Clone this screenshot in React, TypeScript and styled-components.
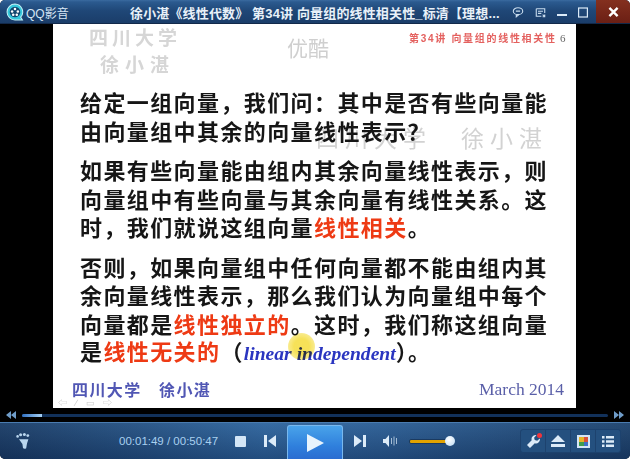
import React from 'react';
import styled, { createGlobalStyle } from 'styled-components';

const GlobalStyle = createGlobalStyle`
  html, body {
    margin: 0;
    padding: 0;
    background: #fff;
    overflow: hidden;
  }
`;

const Player = styled.div`
  width: 630px;
  height: 459px;
  display: flex;
  flex-direction: column;
  background: #000;
  border-radius: 5px 5px 5px 5px;
  overflow: hidden;
  font-family: 'Liberation Sans', 'Noto Sans CJK SC', sans-serif;
`;

const TitleBar = styled.div`
  height: 24px;
  flex: none;
  display: flex;
  align-items: center;
  background: linear-gradient(#3a6ba0 0, #2b5a8f 2px, #1f4777 45%, #1a3c68 100%);
  box-shadow: inset 0 -1px 0 #12294a;
`;

const Logo = styled.svg`
  width: 18px;
  height: 18px;
  margin-left: 6px;
  flex: none;
`;

const AppName = styled.span`
  margin-left: 2px;
  width: 104px;
  flex: none;
  font-size: 12px;
  color: #d5e6f5;
`;

const WindowTitle = styled.span`
  width: 370px;
  flex: none;
  font-size: 13px;
  font-weight: 700;
  letter-spacing: 0.15px;
  color: #e8f1f9;
  white-space: nowrap;
`;

const TitleIcons = styled.div`
  display: flex;
  align-items: center;
  gap: 11px;
  margin-left: 12px;
  width: 84px;
  flex: none;
`;

const CloseButton = styled.div`
  width: 34px;
  height: 23px;
  margin-bottom: 1px;
  flex: none;
  display: flex;
  align-items: center;
  justify-content: center;
  background: linear-gradient(#84301f, #6b1f14);
`;

const VideoArea = styled.div`
  height: 384px;
  flex: none;
  display: flex;
  justify-content: flex-start;
  padding-left: 53px;
  background: #000;
`;

const Slide = styled.div`
  position: relative;
  width: 523px;
  height: 384px;
  box-sizing: border-box;
  padding: 66px 27px 0;
  background: #fff;
  overflow: hidden;
  filter: blur(0.35px);
`;

const Paragraph = styled.p`
  position: relative;
  z-index: 1;
  margin: 0 0 10.5px;
  font-size: 22px;
  letter-spacing: 1.4px;
  line-height: 28.7px;
  font-weight: 700;
  color: #161616;
  white-space: nowrap;
`;

const LastLine = styled.span`
  display: block;
  margin-top: -2px;
`;

const Red = styled.span`
  color: #ee3a14;
  font-weight: 700;
`;

const English = styled.span`
  font-family: 'Liberation Serif', serif;
  font-style: italic;
  font-weight: 700;
  font-size: 19.6px;
  letter-spacing: 0;
  line-height: 1;
  color: #2a35c0;
`;

const Watermark = styled.span<{ $x: number; $y: number; $size: number; $spacing?: number }>`
  position: absolute;
  left: ${p => p.$x}px;
  top: ${p => p.$y}px;
  font-size: ${p => p.$size}px;
  letter-spacing: ${p => p.$spacing ?? 0}px;
  line-height: 1;
  font-weight: 700;
  color: #d6d6d6;
  white-space: nowrap;
`;

const Youku = styled(Watermark)`
  font-weight: 400;
  color: #cfcfcf;
`;

const FaintMark = styled(Watermark)`
  font-weight: 400;
  color: #d2d2d2;
`;

const Caption = styled.span`
  position: absolute;
  left: 356px;
  top: 9px;
  font-size: 10px;
  letter-spacing: 1.7px;
  line-height: 12px;
  font-weight: 700;
  color: #e4615f;
  white-space: nowrap;
`;

const PageNo = styled.span`
  position: absolute;
  left: 507px;
  top: 8px;
  font-family: 'Liberation Serif', serif;
  font-size: 11px;
  color: #666;
`;

const Footer = styled.span`
  position: absolute;
  left: 19px;
  top: 360px;
  font-size: 16px;
  line-height: 14px;
  font-weight: 700;
  letter-spacing: 1.4px;
  color: #5157b4;
  white-space: pre;
`;

const FooterDate = styled.span`
  position: absolute;
  left: 426px;
  top: 355px;
  font-family: 'Liberation Serif', serif;
  font-size: 17.5px;
  line-height: 20px;
  color: #5a5fa8;
`;

const PageNav = styled.span`
  position: absolute;
  left: 5px;
  top: 374px;
  font-size: 9px;
  line-height: 10px;
  letter-spacing: 3px;
  color: #c8c8c8;
  white-space: nowrap;
`;

const Cursor = styled.span`
  position: absolute;
  z-index: 2;
  left: 235px;
  top: 309px;
  width: 27px;
  height: 27px;
  border-radius: 50%;
  background: radial-gradient(circle, rgba(245, 222, 70, 0.9) 40%, rgba(245, 225, 90, 0.35) 100%);
  mix-blend-mode: multiply;
`;

const SeekRow = styled.div`
  height: 14px;
  flex: none;
  display: flex;
  align-items: center;
  gap: 6px;
  padding: 0 6px;
  background: #000;
`;

const SeekTrack = styled.div`
  flex: 1;
  height: 3px;
  background: #12315a;
  border-radius: 2px;
  overflow: hidden;
`;

const SeekFill = styled.div`
  height: 100%;
  background: linear-gradient(90deg, #2f6fc0, #a8d2f5);
`;

const ControlBar = styled.div`
  flex: 1;
  position: relative;
  display: flex;
  align-items: center;
  background:
    linear-gradient(rgba(255, 255, 255, 0.04), rgba(0, 10, 40, 0.28)),
    linear-gradient(90deg, #1b3e68 0, #2f669f 42%, #2c5f96 60%, #1e446f 100%);
  box-shadow: inset 0 1px 0 #4a7cb0;
`;

const Foot = styled.svg`
  margin-left: 16px;
  width: 14px;
  height: 16px;
  flex: none;
`;

const Time = styled.span`
  margin-left: 89px;
  width: 116px;
  flex: none;
  font-size: 11.5px;
  color: #a8d0f0;
  white-space: nowrap;
`;

const ControlIcon = styled.svg<{ $left?: number }>`
  flex: none;
  margin-left: ${p => p.$left ?? 0}px;
`;

const PlayButton = styled.div`
  width: 56px;
  height: 35px;
  margin-left: 11px;
  margin-top: 3px;
  flex: none;
  display: flex;
  align-items: center;
  justify-content: center;
  border: 1px solid #79b8ee;
  border-bottom: none;
  border-radius: 3px 3px 0 0;
  box-sizing: border-box;
  background: linear-gradient(#49a3ea, #2f7fdc 60%, #2a6bd0);
`;

const VolumeTrack = styled.div`
  position: relative;
  width: 40px;
  height: 3px;
  margin-left: 11px;
  flex: none;
  background: #e2a300;
  border: 1px solid #1a3a60;
  border-radius: 2px;
`;

const VolumeKnob = styled.div`
  position: absolute;
  right: -5px;
  top: -4px;
  width: 10px;
  height: 10px;
  border-radius: 50%;
  background: radial-gradient(circle at 40% 35%, #fff, #b9d9f3);
`;

const ToolGroup = styled.div`
  position: absolute;
  right: 9px;
  top: 7px;
  display: flex;
  height: 24px;
  box-sizing: border-box;
  border: 1px solid #1d426e;
  border-radius: 3px;
  background: #24507f;
`;

const ToolButton = styled.div`
  position: relative;
  width: 24px;
  display: flex;
  align-items: center;
  justify-content: center;
  border-left: 1px solid #1d426e;

  &:first-child {
    border-left: none;
  }
`;

const RedDot = styled.span`
  position: absolute;
  top: 3px;
  right: 3px;
  width: 5px;
  height: 5px;
  border-radius: 50%;
  background: #f0343c;
`;

const ICON = '#dcebf8';

export default function App() {
  return (
    <>
      <GlobalStyle />
      <Player>
        <TitleBar>
          <Logo viewBox="0 0 17 17">
            <path d="M8.5 1a7.5 7.5 0 1 0 0 15h7l-1.6-2.6A7.5 7.5 0 0 0 8.5 1z" fill="#35c8dc" stroke="#bff0f5" strokeWidth="1" />
            <circle cx="8.5" cy="8.5" r="5" fill="#12466e" />
            <circle cx="8.5" cy="5.6" r="1.2" fill="#fff" />
            <circle cx="5.8" cy="8" r="1.2" fill="#fff" />
            <circle cx="11.2" cy="8" r="1.2" fill="#fff" />
            <circle cx="6.8" cy="11" r="1.2" fill="#fff" />
            <circle cx="10.2" cy="11" r="1.2" fill="#fff" />
          </Logo>
          <AppName>QQ影音</AppName>
          <WindowTitle>徐小湛《线性代数》 第34讲 向量组的线性相关性_标清【理想...</WindowTitle>
          <TitleIcons>
            <svg width="12" height="12" viewBox="0 0 14 13" fill="none" stroke="#c8dcee" strokeWidth="1.3">
              <ellipse cx="7" cy="5.5" rx="5.5" ry="4" />
              <path d="M5 9.5v2.5l3-2.5" />
              <path d="M4.5 5.5h5" />
            </svg>
            <svg width="11" height="11" viewBox="0 0 13 12" fill="none" stroke="#c8dcee" strokeWidth="1.3">
              <path d="M1.5 1.5h10v5M1.5 1.5v9h6" />
              <path d="M3.5 4.5h6M3.5 7h4" />
              <path d="M9 8.5l2.5 2.5M11.5 8.5v2.5H9" />
            </svg>
            <svg width="10" height="12" viewBox="0 0 10 12">
              <rect y="8" width="10" height="2" fill="#dcebf8" />
            </svg>
            <svg width="10" height="11" viewBox="0 0 10 11" fill="none" stroke="#dcebf8" strokeWidth="1.2">
              <rect x="0.6" y="1" width="8.8" height="9" />
            </svg>
          </TitleIcons>
          <CloseButton>
            <svg width="11" height="10" viewBox="0 0 12 11" stroke="#fff" strokeWidth="2.6">
              <path d="M1.5 1l9 9M10.5 1l-9 9" />
            </svg>
          </CloseButton>
        </TitleBar>

        <VideoArea>
          <Slide>
            <Watermark $x={36} $y={5} $size={19} $spacing={4}>四川大学</Watermark>
            <Watermark $x={47} $y={32} $size={19} $spacing={6}>徐小湛</Watermark>
            <Youku $x={234} $y={14} $size={21}>优酷</Youku>
            <FaintMark $x={263} $y={104} $size={23} $spacing={6}>四川大学　徐小湛</FaintMark>
            <Caption>第34讲 向量组的线性相关性</Caption>
            <PageNo>6</PageNo>

            <Paragraph>给定一组向量，我们问：其中是否有些向量能<br />由向量组中其余的向量线性表示？</Paragraph>
            <Paragraph>如果有些向量能由组内其余向量线性表示，则<br />向量组中有些向量与其余向量有线性关系。这<br />时，我们就说这组向量<Red>线性相关</Red>。</Paragraph>
            <Paragraph>
              否则，如果向量组中任何向量都不能由组内其<br />余向量线性表示，那么我们认为向量组中每个<br />向量都是<Red>线性独立的</Red>。这时，我们称这组向量
              <LastLine>是<Red>线性无关的</Red>（<English>linear independent</English>）。</LastLine>
            </Paragraph>

            <Cursor />
            <Footer>四川大学　徐小湛</Footer>
            <FooterDate>March 2014</FooterDate>
            <PageNav>⇦ ∕ ▭ ⇨</PageNav>
          </Slide>
        </VideoArea>

        <SeekRow>
          <svg width="10" height="8" viewBox="0 0 10 8" fill="#6f9cc8">
            <path d="M5 0v8L0 4zM10 0v8L5 4z" />
          </svg>
          <SeekTrack>
            <SeekFill style={{ width: `${(20 / 586) * 100}%` }} />
          </SeekTrack>
          <svg width="10" height="8" viewBox="0 0 10 8" fill="#6f9cc8">
            <path d="M0 0v8l5-4zM5 0v8l5-4z" />
          </svg>
        </SeekRow>

        <ControlBar>
          <Foot viewBox="0 0 14 16" fill="#b9d6ee">
            <circle cx="1.6" cy="3.4" r="1.3" />
            <circle cx="4.6" cy="1.8" r="1.5" />
            <circle cx="8.4" cy="1.6" r="1.5" />
            <circle cx="11.8" cy="2.6" r="1.4" />
            <path d="M3 6.2h9.4l-1.4 4.4-.8 4.6c-1 .8-2.6.8-3.2-.2L6.4 11z" />
          </Foot>
          <Time>00:01:49 / 00:50:47</Time>
          <ControlIcon $left={0} width="11" height="11" viewBox="0 0 11 11">
            <rect width="11" height="11" rx="1" fill="#d4e6f6" />
          </ControlIcon>
          <ControlIcon $left={18} width="12" height="12" viewBox="0 0 12 12" fill={ICON}>
            <path d="M0 0h3v12H0zM12 0v12L4 6z" />
          </ControlIcon>
          <PlayButton>
            <svg width="17" height="18" viewBox="0 0 17 18">
              <path d="M0 0l17 9L0 18z" fill="#e8f4fd" />
            </svg>
          </PlayButton>
          <ControlIcon $left={11} width="12" height="12" viewBox="0 0 12 12" fill={ICON}>
            <path d="M0 0v12l8-6zM9 0h3v12H9z" />
          </ControlIcon>
          <ControlIcon $left={17} width="15" height="12" viewBox="0 0 15 12" fill={ICON}>
            <path d="M0 4h2.5L6 0v12L2.5 8H0z" />
            <path d="M8 3h1v6H8zM10.5 1.5h1v9h-1zM13 3h1v6h-1z" opacity="0.7" />
          </ControlIcon>
          <VolumeTrack>
            <VolumeKnob />
          </VolumeTrack>
          <ToolGroup>
            <ToolButton>
              <svg width="13" height="13" viewBox="0 0 13 13" fill={ICON}>
                <path d="M8.5 0a4 4 0 0 0-3.8 5.2L0 10l3 3 4.8-4.7A4 4 0 0 0 12.8 3.4l-2.6 2.4-2.5-.7-.6-2.4L9.5.1A4 4 0 0 0 8.5 0z" />
              </svg>
              <RedDot />
            </ToolButton>
            <ToolButton>
              <svg width="14" height="12" viewBox="0 0 14 12" fill={ICON}>
                <path d="M7 0l7 7H0zM0 9h14v3H0z" />
              </svg>
            </ToolButton>
            <ToolButton>
              <svg width="13" height="13" viewBox="0 0 13 13">
                <rect width="13" height="13" fill="#d4e6f6" />
                <rect x="2" y="2" width="5" height="5" fill="#e5b52a" />
                <rect x="7" y="2" width="4" height="5" fill="#d9503a" />
                <rect x="2" y="7" width="5" height="4" fill="#3e9d50" />
                <rect x="7" y="7" width="4" height="4" fill="#3d70c8" />
              </svg>
            </ToolButton>
            <ToolButton>
              <svg width="12" height="11" viewBox="0 0 12 11" fill={ICON}>
                <path d="M0 0h2.5v2.5H0zM4 0h8v2.5H4zM0 4.2h2.5v2.5H0zM4 4.2h8v2.5H4zM0 8.5h2.5V11H0zM4 8.5h8V11H4z" />
              </svg>
            </ToolButton>
          </ToolGroup>
        </ControlBar>
      </Player>
    </>
  );
}
